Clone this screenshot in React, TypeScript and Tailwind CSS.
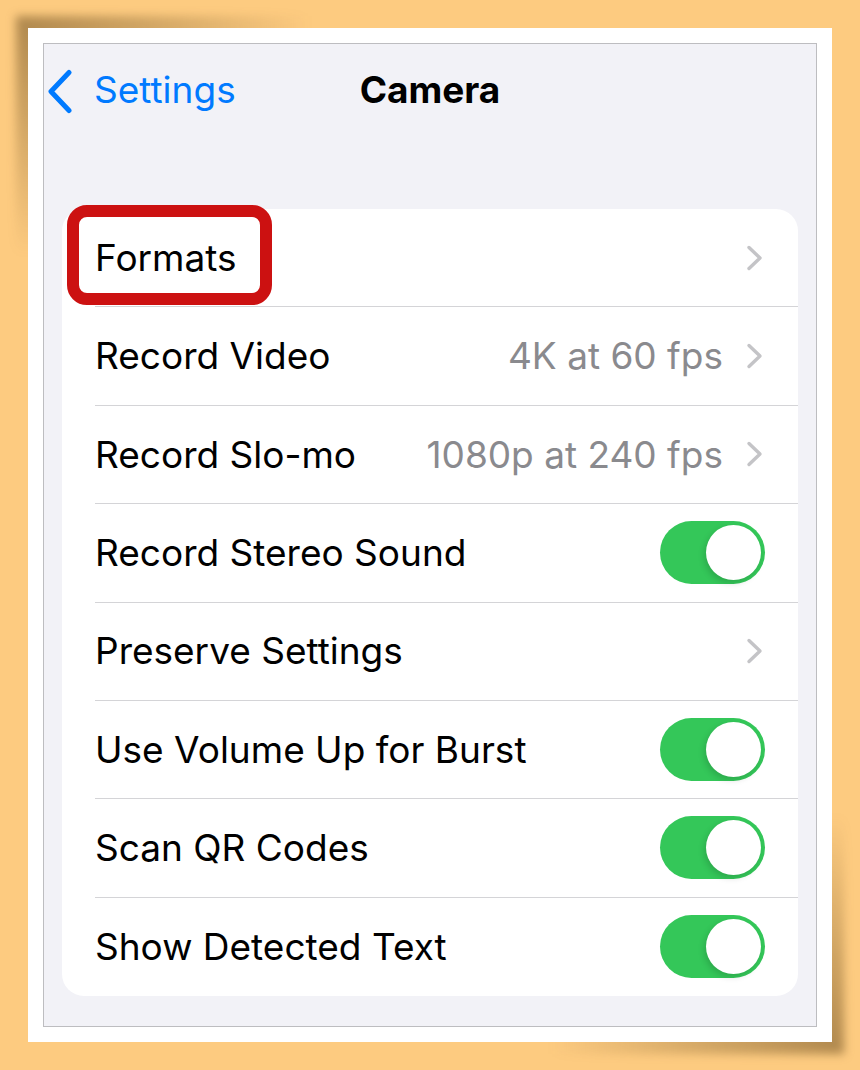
type Row =
  | { label: string; kind: 'link'; value?: string }
  | { label: string; kind: 'toggle'; on: boolean };

const rows: Row[] = [
  { label: 'Formats', kind: 'link' },
  { label: 'Record Video', kind: 'link', value: '4K at 60 fps' },
  { label: 'Record Slo-mo', kind: 'link', value: '1080p at 240 fps' },
  { label: 'Record Stereo Sound', kind: 'toggle', on: true },
  { label: 'Preserve Settings', kind: 'link' },
  { label: 'Use Volume Up for Burst', kind: 'toggle', on: true },
  { label: 'Scan QR Codes', kind: 'toggle', on: true },
  { label: 'Show Detected Text', kind: 'toggle', on: true },
];

const Toggle = ({ on }: { on: boolean }) => (
  <div
    className={`flex h-[63px] w-[105px] items-center rounded-full p-[4px] ${
      on ? 'justify-end bg-[#34c759]' : 'justify-start bg-[#e9e9ea]'
    }`}
  >
    <div className="h-[55px] w-[55px] rounded-full bg-white shadow-[-2px_3px_6px_rgba(0,0,0,0.15)]" />
  </div>
);

const Chevron = () => (
  <svg width="17" height="26" viewBox="0 0 17 26" className="mr-[2px]" fill="none">
    <polyline
      points="3,2.5 14,13 3,23.5"
      stroke="#c4c4c7"
      strokeWidth="3.4"
      strokeLinecap="round"
      strokeLinejoin="round"
    />
  </svg>
);

const SettingsRow = ({ row, last }: { row: Row; last: boolean }) => (
  <div className="flex flex-1 pl-[33px]">
    <div
      className={`flex flex-1 items-center justify-between pr-[33px] ${
        last ? '' : 'border-b border-[#d4d4d7]'
      }`}
    >
      <span className="text-[37px] text-black">{row.label}</span>
      {row.kind === 'toggle' ? (
        <Toggle on={row.on} />
      ) : (
        <div className="flex items-center gap-[23px]">
          {row.value && <span className="text-[37px] text-[#8a8a8e]">{row.value}</span>}
          <Chevron />
        </div>
      )}
    </div>
  </div>
);

export default function App() {
  return (
    <div
      className="min-h-[1070px] w-[860px] bg-[#fdcb80] p-[28px]"
      style={{ fontFamily: 'Inter, "Liberation Sans", sans-serif' }}
    >
      <div className="relative">
        {/* curled-corner shadows */}
        <div className="absolute -left-[12px] -top-[12px] h-[260px] w-[320px] bg-[radial-gradient(ellipse_at_top_left,rgba(110,80,35,0.55),rgba(110,80,35,0)_65%)] blur-[5px]" />
        <div className="absolute -bottom-[12px] -right-[12px] h-[260px] w-[320px] bg-[radial-gradient(ellipse_at_bottom_right,rgba(110,80,35,0.55),rgba(110,80,35,0)_65%)] blur-[5px]" />

        <div className="relative h-[1014px] bg-white p-[15px]">
          <div className="flex h-full flex-col border border-[#bdbdc0] bg-[#f2f2f7] px-[18px]">
            <div className="relative flex h-[92px] items-center">
              <div className="flex items-center text-[#007aff]">
                <svg width="26" height="45" viewBox="0 0 26 45" className="-ml-[15px] mt-[2px]" fill="none">
                  <polyline
                    points="22,3.5 4,22.5 22,41.5"
                    stroke="#007aff"
                    strokeWidth="5"
                    strokeLinecap="round"
                    strokeLinejoin="round"
                  />
                </svg>
                <span className="ml-[21px] text-[37px]">Settings</span>
              </div>
              <span className="absolute left-0 right-0 mx-auto w-fit text-[37px] font-bold text-black">
                Camera
              </span>
            </div>

            <div className="relative mt-[73px] flex h-[787px] flex-col rounded-[22px] bg-white">
              {rows.map((row, i) => (
                <SettingsRow key={row.label} row={row} last={i === rows.length - 1} />
              ))}
              <div className="absolute left-[5px] top-[-4px] h-[100px] w-[205px] rounded-[20px] border-[12px] border-[#cc1111]" />
            </div>
          </div>
        </div>
      </div>
    </div>
  );
}
